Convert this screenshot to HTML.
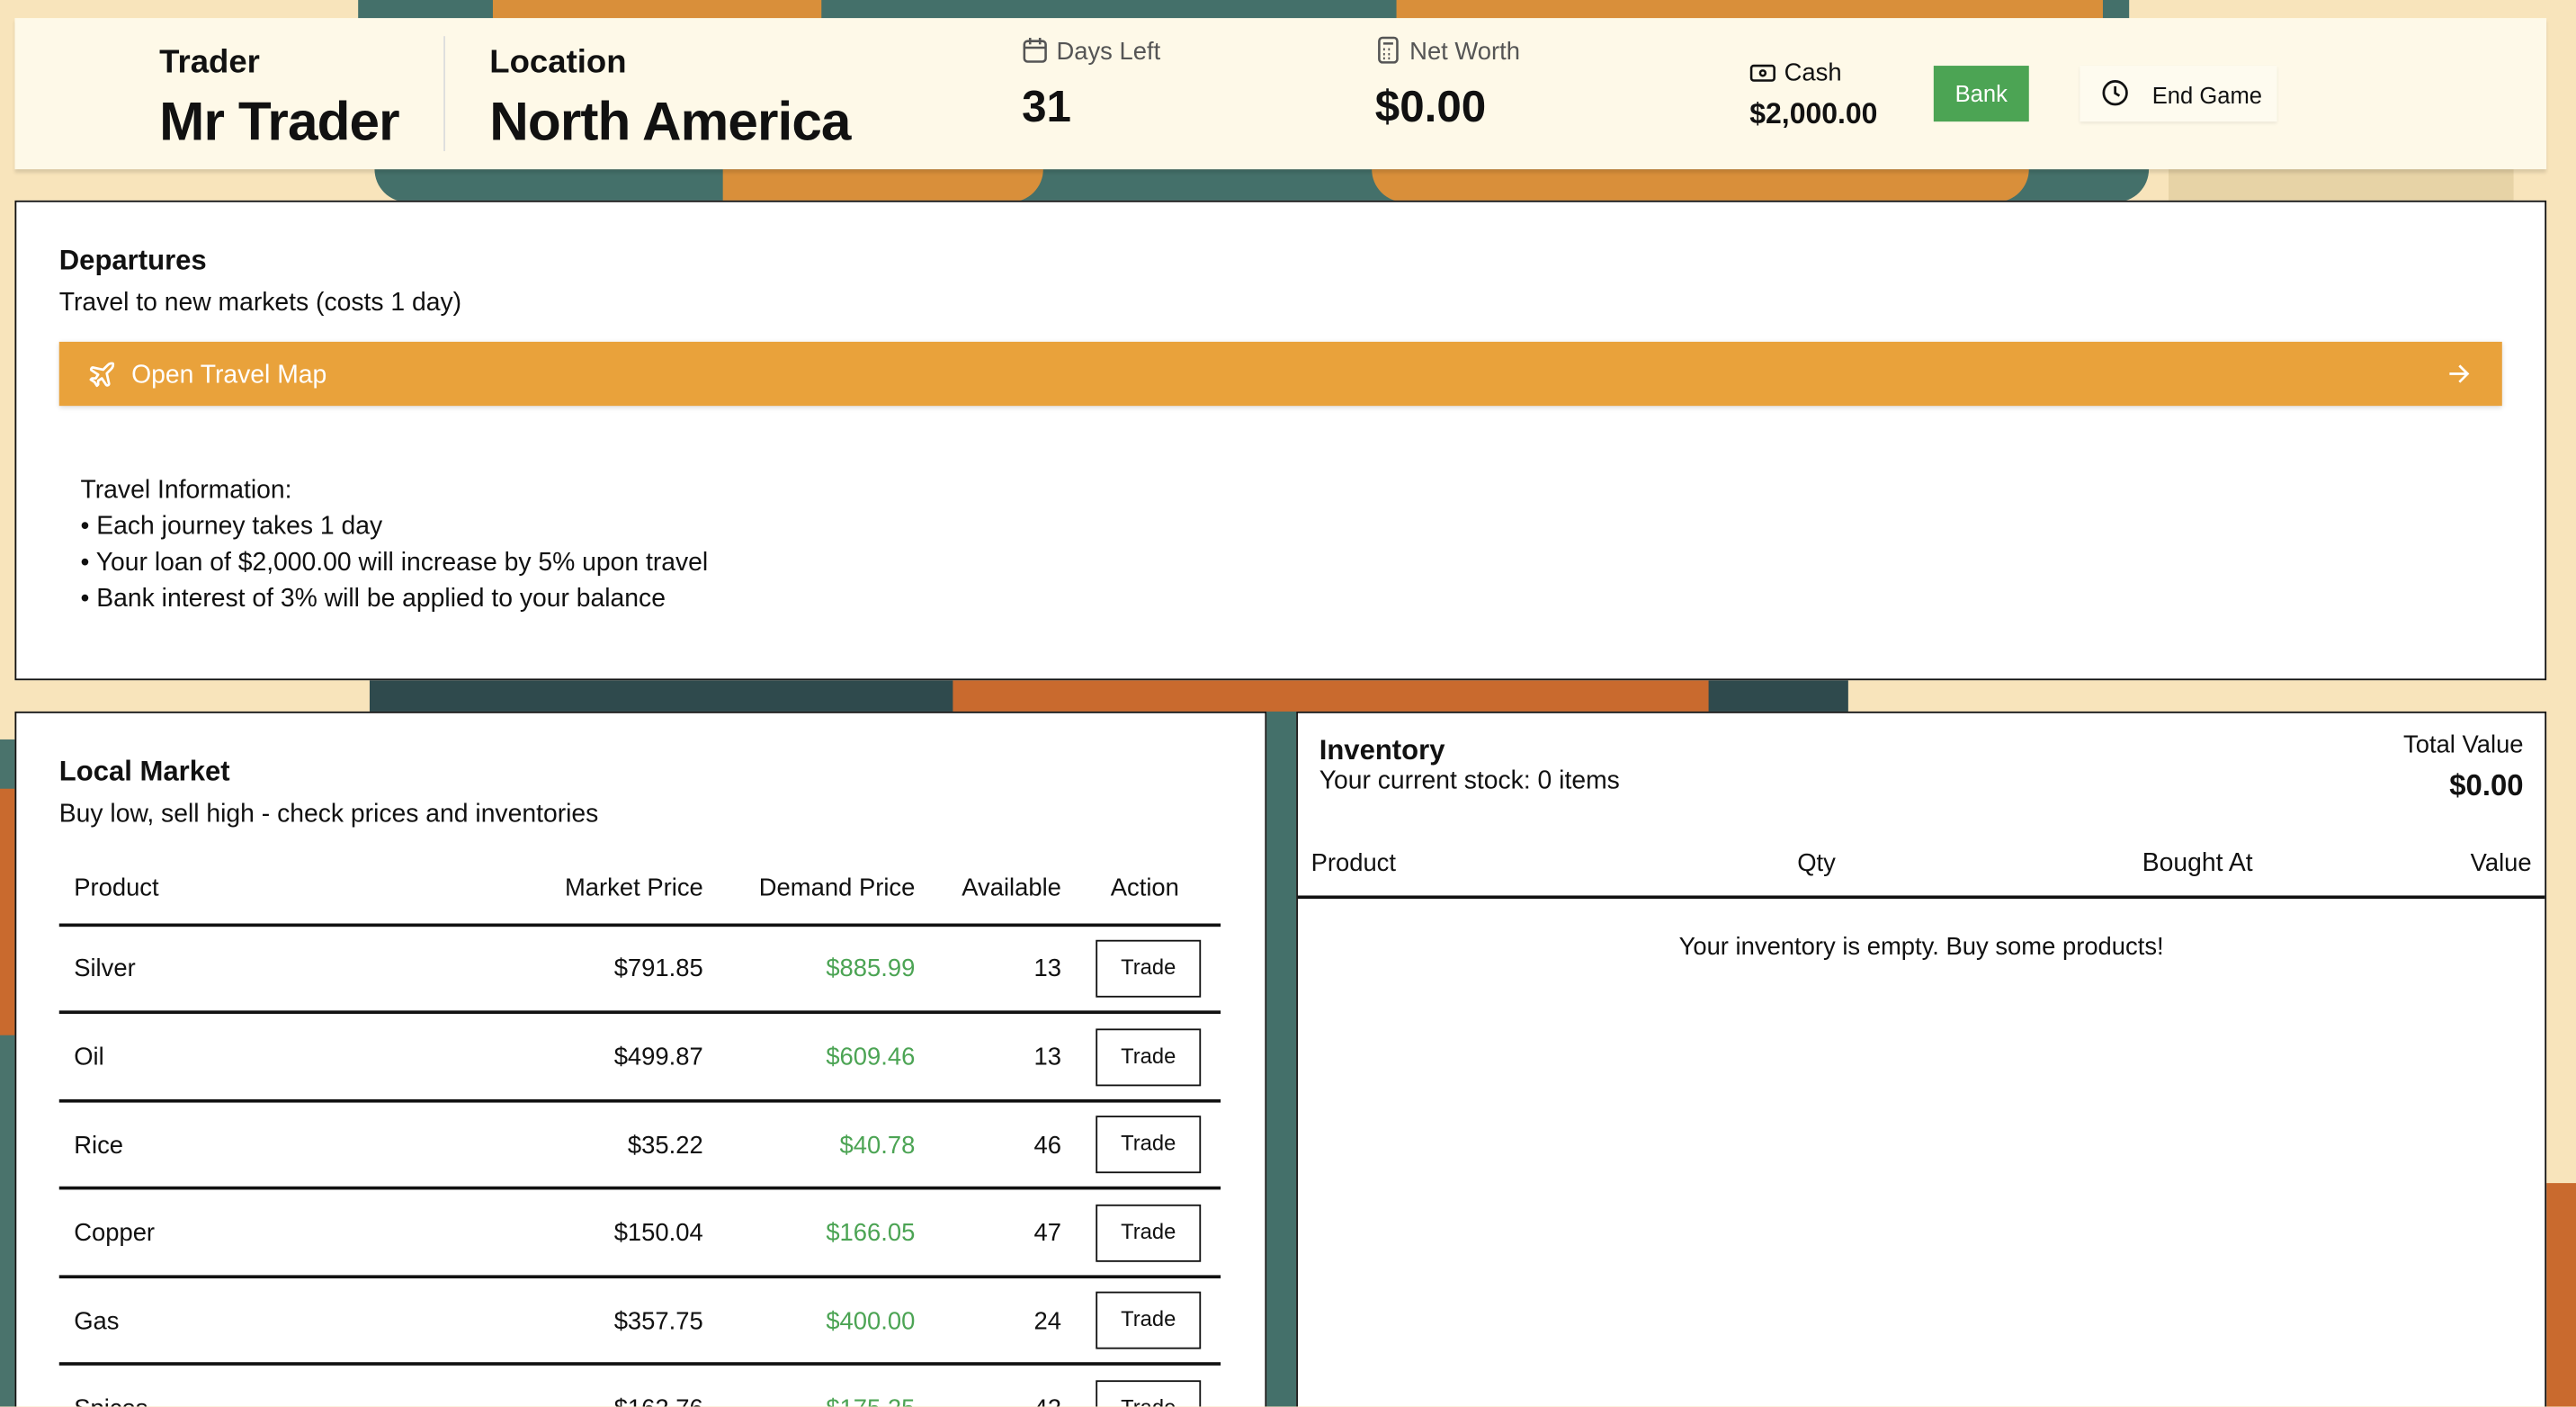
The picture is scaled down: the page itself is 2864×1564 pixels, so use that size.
<!DOCTYPE html>
<html><head><meta charset="utf-8"><style>
*{box-sizing:border-box;margin:0;padding:0}
html,body{width:2864px;height:1564px;overflow:hidden;background:#f8e4bb}
#w{position:absolute;left:0;top:0;width:1568px;height:856px;transform:scale(1.826531);transform-origin:0 0;font-family:"Liberation Sans",sans-serif;color:#111;overflow:hidden}
.a{position:absolute}
.panel{position:absolute;background:#fff;border:1.5px solid #111}
.t{position:absolute;white-space:nowrap;margin-top:1px}
.r{text-align:right}
.btn{position:absolute;width:64px;height:35px;border:1.5px solid #111;background:#fff;font-size:13px;text-align:center;line-height:32px}
.line{position:absolute;height:2px;background:#111}
</style></head><body><div id="w">
<div class="a" style="left:218px;top:0;width:1078px;height:12px;background:#44706a"></div>
<div class="a" style="left:300px;top:0;width:200px;height:12px;background:#d98f3a"></div>
<div class="a" style="left:850px;top:0;width:430px;height:12px;background:#d98f3a"></div>
<div class="a" style="left:228px;top:103px;width:1080px;height:20px;background:#44706a;border-radius:0 0 30px 30px"></div>
<div class="a" style="left:440px;top:103px;width:195px;height:20px;background:#d98f3a;border-radius:0 0 40px 0"></div>
<div class="a" style="left:835px;top:103px;width:400px;height:20px;background:#d98f3a;border-radius:0 0 20px 20px"></div>
<div class="a" style="left:1320px;top:103px;width:210px;height:20px;background:#e7d3a6"></div>
<div class="a" style="left:225px;top:414px;width:900px;height:20px;background:#2f4a4d"></div>
<div class="a" style="left:580px;top:414px;width:460px;height:20px;background:#c96a2e"></div>
<div class="a" style="left:0;top:450px;width:9px;height:406px;background:#4a736c"></div>
<div class="a" style="left:0;top:480px;width:9px;height:150px;background:#c96a2e"></div>
<div class="a" style="left:770px;top:433px;width:19px;height:423px;background:#44706a"></div>
<div class="a" style="left:1550px;top:720px;width:18px;height:136px;background:#c96a2e"></div>

<div class="a" style="left:9px;top:11px;width:1541px;height:92px;background:#fef9e8;box-shadow:0 2px 2px rgba(0,0,0,.12)"></div>
<div class="t" style="left:97px;top:26px;font-size:20px;font-weight:bold">Trader</div>
<div class="t" style="left:97px;top:54px;font-size:33px;font-weight:bold;letter-spacing:-0.5px">Mr Trader</div>
<div class="a" style="left:270px;top:22px;width:1px;height:70px;background:#ddd"></div>
<div class="t" style="left:298px;top:26px;font-size:20px;font-weight:bold">Location</div>
<div class="t" style="left:298px;top:54px;font-size:33px;font-weight:bold;letter-spacing:-0.5px">North America</div>
<svg class="a" style="left:622px;top:22px" width="16" height="17" viewBox="0 0 16 17" fill="none" stroke="#555" stroke-width="1.4"><rect x="1.5" y="3" width="13" height="12.5" rx="2"/><path d="M1.5 7h13M5 1v4M11 1v4"/></svg>
<div class="t" style="left:643px;top:22px;font-size:15px;color:#555">Days Left</div>
<div class="t" style="left:622px;top:49px;font-size:27px;font-weight:bold">31</div>
<svg class="a" style="left:838px;top:22px" width="14" height="17" viewBox="0 0 14 17" fill="none" stroke="#555" stroke-width="1.4"><rect x="1.5" y="1" width="11" height="15" rx="2"/><path d="M4 4.5h6M4 8h1M7 8h1M4 11h1M7 11h1M4 13.5h1M7 13.5h1"/></svg>
<div class="t" style="left:858px;top:22px;font-size:15px;color:#555">Net Worth</div>
<div class="t" style="left:837px;top:49px;font-size:27px;font-weight:bold">$0.00</div>
<svg class="a" style="left:1065px;top:38px" width="16" height="13" viewBox="0 0 16 13" fill="none" stroke="#111" stroke-width="1.4"><rect x="1" y="2" width="14" height="9" rx="1.5"/><circle cx="8" cy="6.5" r="1.6"/></svg>
<div class="t" style="left:1086px;top:35px;font-size:15px">Cash</div>
<div class="t" style="left:1065px;top:58px;font-size:17.5px;font-weight:bold">$2,000.00</div>
<div class="a" style="left:1177px;top:40px;width:58px;height:34px;background:#4ca454;color:#fff;font-size:14px;text-align:center;line-height:34px">Bank</div>
<div class="a" style="left:1266px;top:40px;width:120px;height:34px;background:#fefbef;box-shadow:0 1px 2px rgba(0,0,0,.08)"></div>
<svg class="a" style="left:1279px;top:48px" width="17" height="17" viewBox="0 0 17 17" fill="none" stroke="#111" stroke-width="1.5"><circle cx="8.5" cy="8.5" r="7"/><path d="M8.5 4.5v4.2l2.6 1.6"/></svg>
<div class="t" style="left:1310px;top:49px;font-size:14px">End Game</div>

<div class="panel" style="left:9px;top:122px;width:1541px;height:292px"></div>
<div class="t" style="left:36px;top:148px;font-size:17px;font-weight:bold">Departures</div>
<div class="t" style="left:36px;top:175px;font-size:15.5px">Travel to new markets (costs 1 day)</div>
<div class="a" style="left:36px;top:208px;width:1487px;height:39px;background:#e9a23b;box-shadow:0 1px 3px rgba(0,0,0,.15)"></div>
<svg class="a" style="left:53px;top:219px" width="18" height="18" viewBox="0 0 24 24" fill="none" stroke="#fff" stroke-width="2" stroke-linejoin="round"><path d="M17.8 19.2 16 11l3.5-3.5C21 6 21.5 4 21 3c-1-.5-3 0-4.5 1.5L13 8 4.8 6.2c-.5-.1-.9.1-1.1.5l-.3.5c-.2.5-.1 1 .3 1.3L9 12l-2 3H4l-1 1 3 2 2 3 1-1v-3l3-2 3.5 5.3c.3.4.8.5 1.3.3l.5-.2c.4-.3.6-.7.5-1.2z"/></svg>
<div class="t" style="left:80px;top:219px;font-size:15.5px;color:#fff">Open Travel Map</div>
<svg class="a" style="left:1489px;top:220px" width="15" height="15" viewBox="0 0 15 15" fill="none" stroke="#fff" stroke-width="1.5"><path d="M2 7.5h11M8 2.5l5 5-5 5"/></svg>
<div class="t" style="left:49px;top:289px;font-size:15.5px">Travel Information:</div>
<div class="t" style="left:49px;top:311px;font-size:15.5px">• Each journey takes 1 day</div>
<div class="t" style="left:49px;top:333px;font-size:15.5px">• Your loan of $2,000.00 will increase by 5% upon travel</div>
<div class="t" style="left:49px;top:355px;font-size:15.5px">• Bank interest of 3% will be applied to your balance</div>

<div class="panel" style="left:9px;top:433px;width:762px;height:440px"></div>
<div class="t" style="left:36px;top:459px;font-size:17px;font-weight:bold">Local Market</div>
<div class="t" style="left:36px;top:486px;font-size:15.5px">Buy low, sell high - check prices and inventories</div>
<div class="t" style="left:45px;top:531px;font-size:15px">Product</div>
<div class="t r" style="right:1140px;top:531px;font-size:15px">Market Price</div>
<div class="t r" style="right:1011px;top:531px;font-size:15px">Demand Price</div>
<div class="t r" style="right:922px;top:531px;font-size:15px">Available</div>
<div class="t" style="left:676px;top:531px;font-size:15px">Action</div>
<div class="line" style="left:36px;top:562px;width:707px"></div>

<div class="t" style="left:45px;top:580px;font-size:15px">Silver</div><div class="t r" style="right:1140px;top:580px;font-size:15px">$791.85</div><div class="t r" style="right:1011px;top:580px;font-size:15px;color:#4ca454">$885.99</div><div class="t r" style="right:922px;top:580px;font-size:15px">13</div><div class="btn" style="left:667px;top:572px">Trade</div>
<div class="line" style="left:36px;top:615px;width:707px"></div>
<div class="t" style="left:45px;top:634px;font-size:15px">Oil</div><div class="t r" style="right:1140px;top:634px;font-size:15px">$499.87</div><div class="t r" style="right:1011px;top:634px;font-size:15px;color:#4ca454">$609.46</div><div class="t r" style="right:922px;top:634px;font-size:15px">13</div><div class="btn" style="left:667px;top:626px">Trade</div>
<div class="line" style="left:36px;top:669px;width:707px"></div>
<div class="t" style="left:45px;top:688px;font-size:15px">Rice</div><div class="t r" style="right:1140px;top:688px;font-size:15px">$35.22</div><div class="t r" style="right:1011px;top:688px;font-size:15px;color:#4ca454">$40.78</div><div class="t r" style="right:922px;top:688px;font-size:15px">46</div><div class="btn" style="left:667px;top:679px">Trade</div>
<div class="line" style="left:36px;top:722px;width:707px"></div>
<div class="t" style="left:45px;top:741px;font-size:15px">Copper</div><div class="t r" style="right:1140px;top:741px;font-size:15px">$150.04</div><div class="t r" style="right:1011px;top:741px;font-size:15px;color:#4ca454">$166.05</div><div class="t r" style="right:922px;top:741px;font-size:15px">47</div><div class="btn" style="left:667px;top:733px">Trade</div>
<div class="line" style="left:36px;top:776px;width:707px"></div>
<div class="t" style="left:45px;top:795px;font-size:15px">Gas</div><div class="t r" style="right:1140px;top:795px;font-size:15px">$357.75</div><div class="t r" style="right:1011px;top:795px;font-size:15px;color:#4ca454">$400.00</div><div class="t r" style="right:922px;top:795px;font-size:15px">24</div><div class="btn" style="left:667px;top:786px">Trade</div>
<div class="line" style="left:36px;top:829px;width:707px"></div>
<div class="t" style="left:45px;top:848px;font-size:15px">Spices</div><div class="t r" style="right:1140px;top:848px;font-size:15px">$162.76</div><div class="t r" style="right:1011px;top:848px;font-size:15px;color:#4ca454">$175.25</div><div class="t r" style="right:922px;top:848px;font-size:15px">42</div><div class="btn" style="left:667px;top:840px">Trade</div>

<div class="panel" style="left:789px;top:433px;width:761px;height:440px"></div>
<div class="t" style="left:803px;top:446px;font-size:17px;font-weight:bold">Inventory</div>
<div class="t" style="left:803px;top:466px;font-size:15.5px">Your current stock: 0 items</div>
<div class="t r" style="right:32px;top:444px;font-size:15px">Total Value</div>
<div class="t r" style="right:32px;top:467px;font-size:18px;font-weight:bold">$0.00</div>
<div class="t" style="left:798px;top:516px;font-size:15px">Product</div>
<div class="t" style="left:1094px;top:516px;font-size:15px">Qty</div>
<div class="t" style="left:1304px;top:516px;font-size:15.5px">Bought At</div>
<div class="t r" style="right:27px;top:516px;font-size:15px">Value</div>
<div class="line" style="left:790px;top:545px;width:759px"></div>
<div class="t" style="left:789px;width:761px;text-align:center;top:567px;font-size:15px">Your inventory is empty. Buy some products!</div>
</div></body></html>
